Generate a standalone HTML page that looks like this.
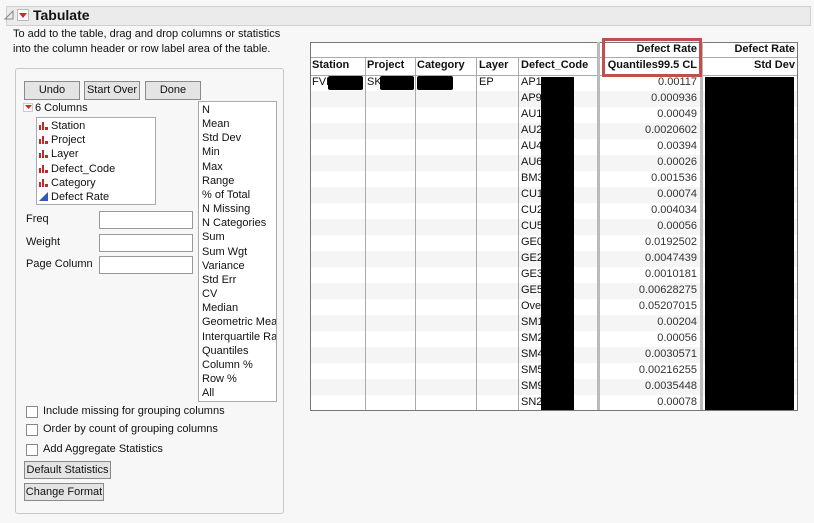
<!DOCTYPE html>
<html><head><style>
body{margin:0;width:814px;height:523px;background:#f7f7f7;font-family:"Liberation Sans",sans-serif;font-size:11px;color:#111;position:relative;overflow:hidden}
.a{position:absolute;white-space:nowrap}
.btn{position:absolute;background:#e4e4e4;border:1px solid #8a8a8a;text-align:center;line-height:17px;font-size:11px;box-sizing:border-box;white-space:nowrap;overflow:hidden}
.box{position:absolute;background:#fff;border:1px solid #aaa;box-sizing:border-box}
.cb{position:absolute;width:12px;height:12px;border:1px solid #888;background:#fff;box-sizing:border-box}
.ic{display:inline-block;width:9px;height:9px;margin-right:3px;vertical-align:-1px}
</style></head><body>
<div class="a" style="left:6px;top:6px;width:805px;height:20px;background:#ebebeb;border:1px solid #d0d0d0;box-sizing:border-box"></div>
<svg class="a" style="left:4px;top:10px" width="10" height="10"><path d="M1 9 L9 9 L9 1 Z" fill="none" stroke="#888"/></svg>
<div class="a" style="left:17px;top:9px;width:12px;height:12px;background:#fff;border:1px solid #bbb;box-sizing:border-box"></div>
<svg class="a" style="left:19px;top:13px" width="8" height="5"><path d="M0 0 L8 0 L4 5 Z" fill="#d22"/></svg>
<div class="a" style="left:33px;top:7px;font-weight:bold;font-size:14px">Tabulate</div>
<div class="a" style="left:13px;top:27px;line-height:15px">To add to the table, drag and drop columns or statistics<br>into the column header or row label area of the table.</div>
<div class="a" style="left:15px;top:68px;width:269px;height:446px;border:1px solid #c8c8c8;border-radius:3px;box-sizing:border-box"></div>
<div class="btn" style="left:24px;top:81px;width:56px;height:19px">Undo</div>
<div class="btn" style="left:84px;top:81px;width:56px;height:19px">Start Over</div>
<div class="btn" style="left:145px;top:81px;width:56px;height:19px">Done</div>
<div class="a" style="left:23px;top:103px;width:10px;height:9px;background:#fff;border:1px solid #ccc;box-sizing:border-box"></div>
<svg class="a" style="left:25px;top:105px" width="7" height="4"><path d="M0 0 L7 0 L3.5 4Z" fill="#d22"/></svg>
<div class="a" style="left:35px;top:102px">6 Columns</div>
<div class="box" style="left:36px;top:117px;width:120px;height:88px"></div>
<div class="a" style="left:39px;top:119px;line-height:14.2px">
<div><svg class="ic" viewBox="0 0 9 9"><path d="M0 9V4h2v5zM3 9V1h2v8zM6 9V6h3v3z" fill="#c0282a"/></svg>Station</div>
<div><svg class="ic" viewBox="0 0 9 9"><path d="M0 9V4h2v5zM3 9V1h2v8zM6 9V6h3v3z" fill="#c0282a"/></svg>Project</div>
<div><svg class="ic" viewBox="0 0 9 9"><path d="M0 9V4h2v5zM3 9V1h2v8zM6 9V6h3v3z" fill="#c0282a"/></svg>Layer</div>
<div><svg class="ic" viewBox="0 0 9 9"><path d="M0 9V4h2v5zM3 9V1h2v8zM6 9V6h3v3z" fill="#c0282a"/></svg>Defect_Code</div>
<div><svg class="ic" viewBox="0 0 9 9"><path d="M0 9V4h2v5zM3 9V1h2v8zM6 9V6h3v3z" fill="#c0282a"/></svg>Category</div>
<div><svg class="ic" viewBox="0 0 9 9"><path d="M0 9L9 0V9Z" fill="#2d5bb5"/></svg>Defect Rate</div>
</div>
<div class="box" style="left:198px;top:101px;width:79px;height:301px;overflow:hidden"><div class="a" style="left:3px;top:1px;line-height:14.15px">N<br>Mean<br>Std Dev<br>Min<br>Max<br>Range<br>% of Total<br>N Missing<br>N Categories<br>Sum<br>Sum Wgt<br>Variance<br>Std Err<br>CV<br>Median<br>Geometric Mean<br>Interquartile Range<br>Quantiles<br>Column %<br>Row %<br>All</div></div>
<div class="a" style="left:26px;top:213px">Freq</div>
<div class="a" style="left:26px;top:236px">Weight</div>
<div class="a" style="left:26px;top:258px">Page Column</div>
<div class="box" style="left:99px;top:211px;width:94px;height:18px;border-color:#999"></div>
<div class="box" style="left:99px;top:234px;width:94px;height:18px;border-color:#999"></div>
<div class="box" style="left:99px;top:256px;width:94px;height:18px;border-color:#999"></div>
<div class="cb" style="left:26px;top:406px"></div><div class="a" style="left:43px;top:405px">Include missing for grouping columns</div>
<div class="cb" style="left:26px;top:424px"></div><div class="a" style="left:43px;top:423px">Order by count of grouping columns</div>
<div class="cb" style="left:26px;top:444px"></div><div class="a" style="left:43px;top:443px">Add Aggregate Statistics</div>
<div class="btn" style="left:24px;top:461px;width:87px;height:18px">Default Statistics</div>
<div class="btn" style="left:24px;top:483px;width:80px;height:18px">Change Format</div>

<div class="a" style="left:310px;top:42px;width:488px;height:369px;background:#fff;border:1px solid #777;box-sizing:border-box"></div>
<div id="rows"></div>
<script>
var vals=["0.00117","0.000936","0.00049","0.0020602","0.00394","0.00026","0.001536","0.00074","0.004034","0.00056","0.0192502","0.0047439","0.0010181","0.00628275","0.05207015","0.00204","0.00056","0.0030571","0.00216255","0.0035448","0.00078"];
var codes=["AP1","AP9","AU1","AU2","AU4","AU6","BM3","CU1","CU2","CU5","GE0","GE2","GE3","GE5","Ove","SM1","SM2","SM4","SM5","SM9","SN2"];
var h="";
for(var i=0;i<21;i++){var y=75+i*16;
if(i%2)h+='<div class="a" style="left:311px;top:'+y+'px;width:486px;height:16px;background:#f5f5f5"></div>';
h+='<div class="a" style="left:521px;top:'+(y+1)+'px">'+codes[i]+'</div>';
h+='<div class="a" style="left:600px;width:97px;text-align:right;top:'+(y+1)+'px;color:#333">'+vals[i]+'</div>';}
document.getElementById("rows").innerHTML=h;
</script>
<div class="a" style="left:311px;top:57px;width:486px;height:17px;background:#fff;border-top:1px solid #aaa;border-bottom:1px solid #aaa"></div>
<div class="a" style="left:365px;top:57px;width:1px;height:353px;background:#aaa"></div>
<div class="a" style="left:415px;top:57px;width:1px;height:353px;background:#aaa"></div>
<div class="a" style="left:476px;top:57px;width:1px;height:353px;background:#aaa"></div>
<div class="a" style="left:518px;top:57px;width:1px;height:353px;background:#aaa"></div>
<div class="a" style="left:597px;top:42px;width:3px;height:368px;background:#bbb"></div>
<div class="a" style="left:700px;top:42px;width:3px;height:368px;background:#bbb"></div>
<div class="a" style="left:312px;top:59px;font-weight:bold">Station</div>
<div class="a" style="left:367px;top:59px;font-weight:bold">Project</div>
<div class="a" style="left:417px;top:59px;font-weight:bold">Category</div>
<div class="a" style="left:479px;top:59px;font-weight:bold">Layer</div>
<div class="a" style="left:521px;top:59px;font-weight:bold">Defect_Code</div>
<div class="a" style="left:600px;width:97px;text-align:right;top:43px;font-weight:bold">Defect Rate</div>
<div class="a" style="left:600px;width:97px;text-align:right;top:59px;font-weight:bold">Quantiles99.5 CL</div>
<div class="a" style="left:703px;width:92px;text-align:right;top:43px;font-weight:bold">Defect Rate</div>
<div class="a" style="left:703px;width:92px;text-align:right;top:59px;font-weight:bold">Std Dev</div>
<div class="a" style="left:312px;top:76px">FVI</div>
<div class="a" style="left:367px;top:76px">SK</div>
<div class="a" style="left:479px;top:76px">EP</div>
<div class="a" style="left:328px;top:76px;width:35px;height:14px;background:#000;border-radius:2px"></div>
<div class="a" style="left:380px;top:76px;width:34px;height:14px;background:#000;border-radius:2px"></div>
<div class="a" style="left:417px;top:76px;width:36px;height:14px;background:#000;border-radius:2px"></div>
<div class="a" style="left:541px;top:77px;width:33px;height:333px;background:#000"></div>
<div class="a" style="left:705px;top:77px;width:89px;height:333px;background:#000"></div>
<div class="a" style="left:602px;top:38px;width:100px;height:39px;border:3px solid #c0504d;box-sizing:border-box"></div>
</body></html>
